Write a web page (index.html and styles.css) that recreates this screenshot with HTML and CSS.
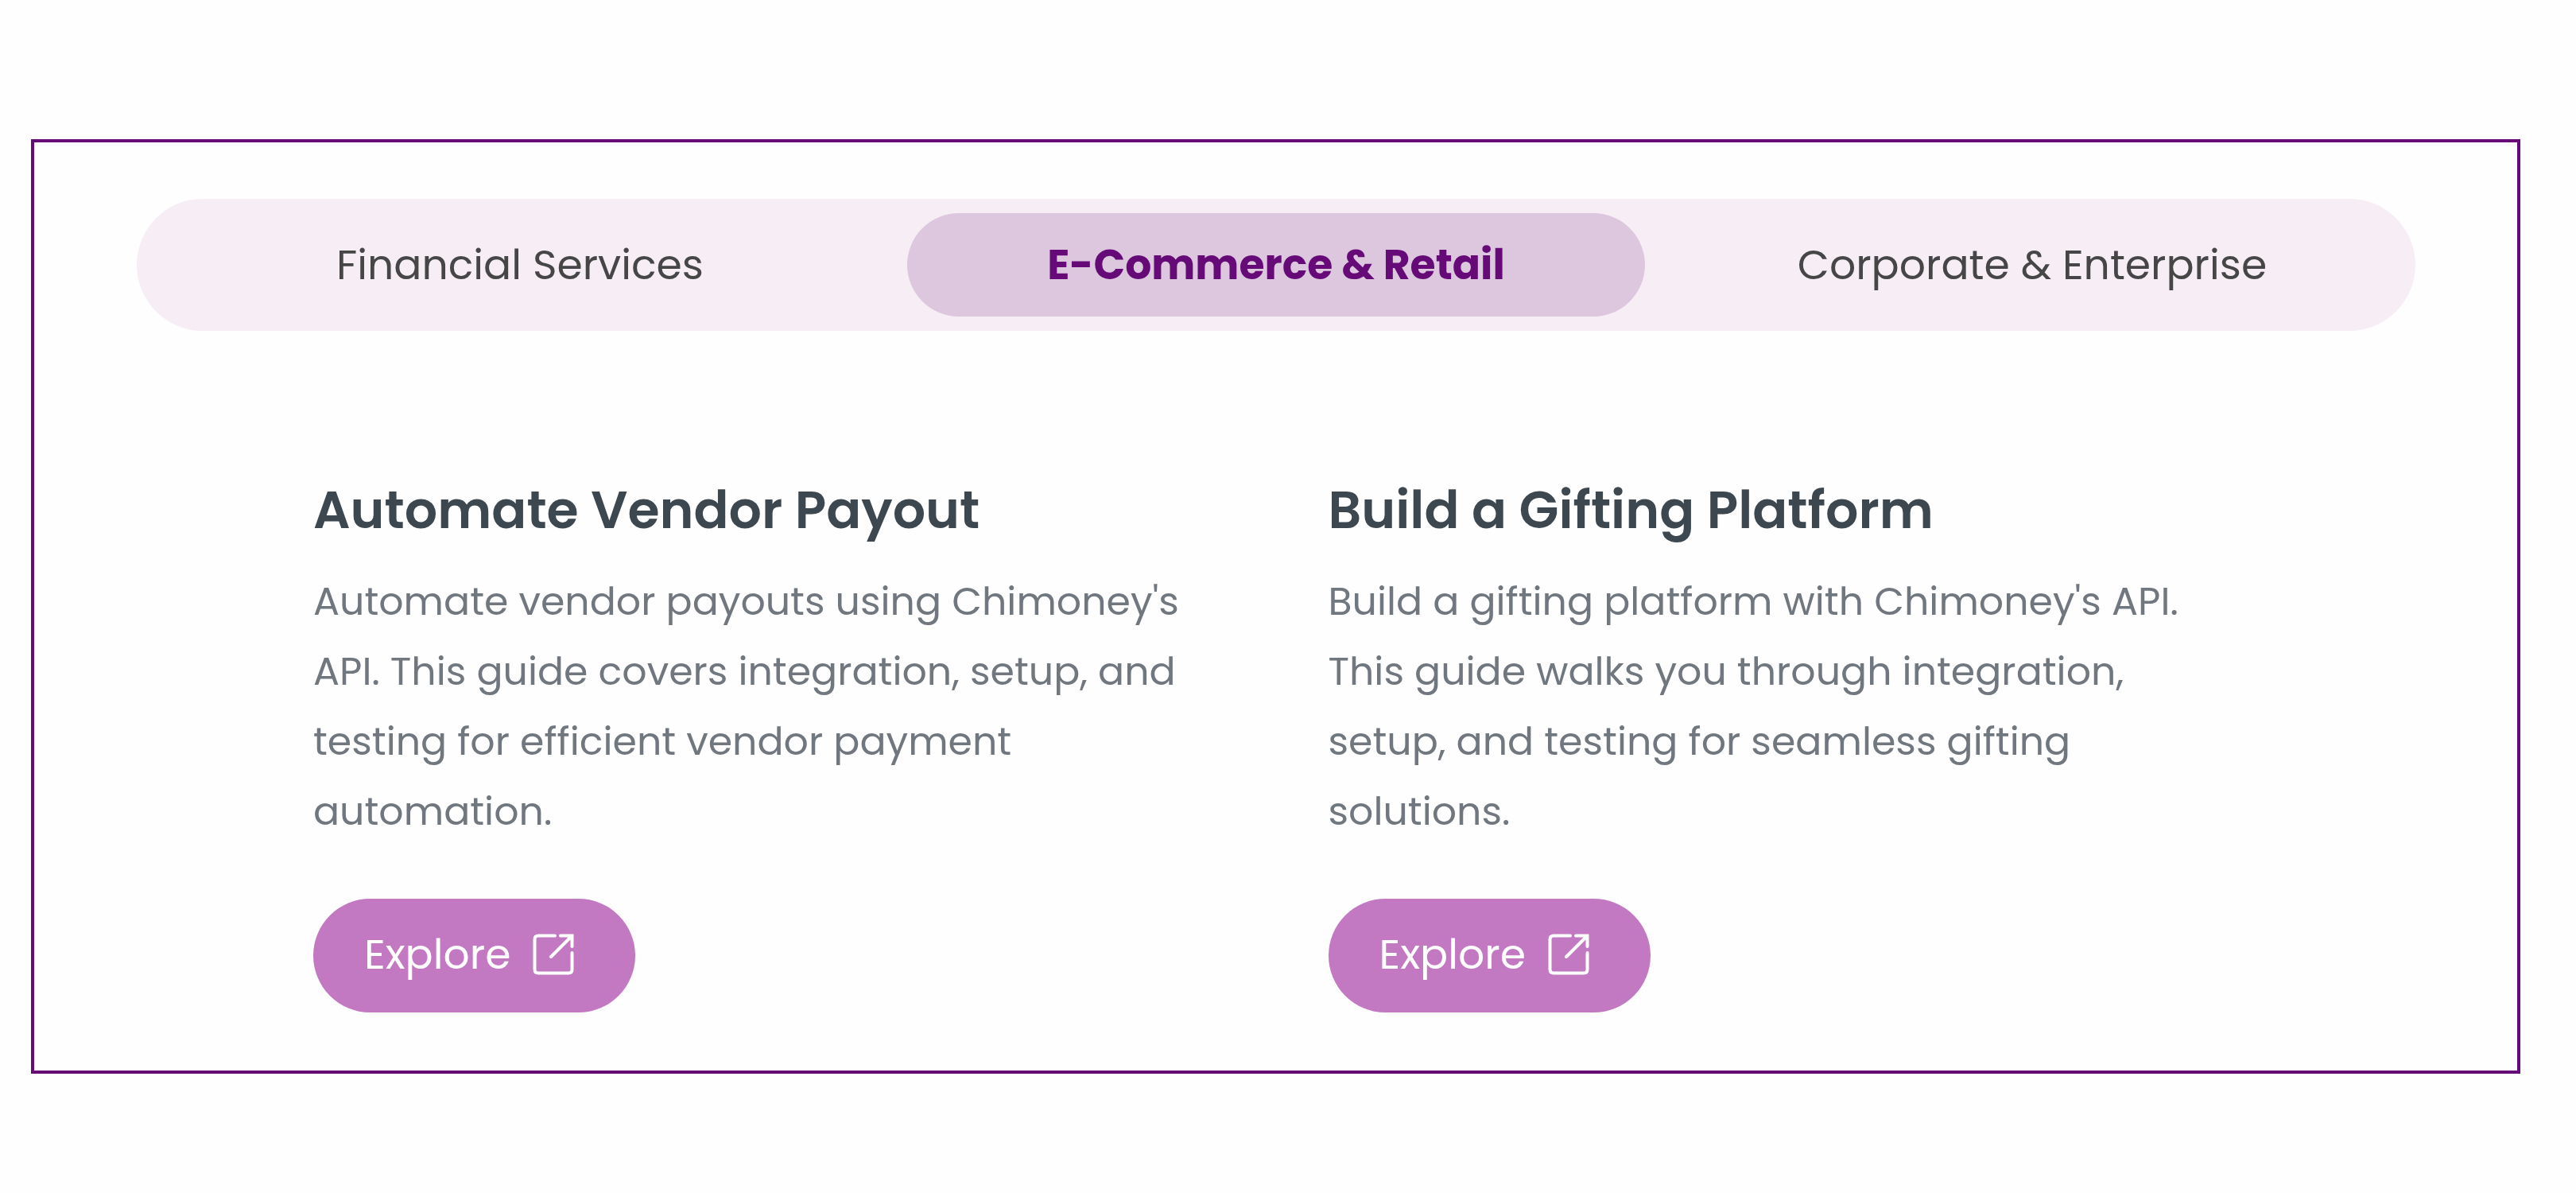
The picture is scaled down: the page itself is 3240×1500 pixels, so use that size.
FILE: index.html
```html
<!DOCTYPE html>
<html lang="en">
<head>
    <meta charset="utf-8">
    <title>Use cases</title>
    <link rel="stylesheet" href="styles.css">
</head>
<body>
    <main class="frame">
        <nav class="tabs">
            <button type="button" class="tab">Financial Services</button>
            <button type="button" class="tab active">E-Commerce &amp; Retail</button>
            <button type="button" class="tab">Corporate &amp; Enterprise</button>
        </nav>
        <section class="guides">
            <article class="guide">
                <h2>Automate Vendor Payout</h2>
                <p>Automate vendor payouts using Chimoney's API. This guide covers integration, setup, and testing for efficient vendor payment automation.</p>
                <a href="#" class="explore">
                    Explore
                    <svg class="icon" viewBox="0 0 52 52">
                        <path d="M28 2.5H7Q2.5 2.5 2.5 7V45Q2.5 49.5 7 49.5H45Q49.5 49.5 49.5 45V24"/>
                        <path d="M35 2.5H49.5V16M48 4L23 29"/>
                    </svg>
                </a>
            </article>
            <article class="guide">
                <h2>Build a Gifting Platform</h2>
                <p>Build a gifting platform with Chimoney's API. This guide walks you through integration, setup, and testing for seamless gifting solutions.</p>
                <a href="#" class="explore">
                    Explore
                    <svg class="icon" viewBox="0 0 52 52">
                        <path d="M28 2.5H7Q2.5 2.5 2.5 7V45Q2.5 49.5 7 49.5H45Q49.5 49.5 49.5 45V24"/>
                        <path d="M35 2.5H49.5V16M48 4L23 29"/>
                    </svg>
                </a>
            </article>
        </section>
    </main>
</body>
</html>
```
FILE: styles.css
```css
* {
    box-sizing: border-box;
}
body {
    margin: 0;
    padding: 175px 70px 0 39px;
    background: #fefefe;
    font-family: Poppins, Inter, sans-serif;
}
.frame {
    border: 4px solid #650a77;
    padding: 71px 128px 73px 129px;
}
.tabs {
    display: grid;
    grid-template-columns: repeat(3, 1fr);
    gap: 23px;
    padding: 18px;
    border-radius: 83px;
    background: #f7edf5;
}
.tab {
    height: 130px;
    border: 0;
    border-radius: 65px;
    background: none;
    color: #464646;
    font: 52px Poppins, Inter, sans-serif;
    cursor: pointer;
}
.tab.active {
    background: #ddc7df;
    color: #650a77;
    font-weight: 700;
}
.guides {
    display: grid;
    grid-template-columns: 1fr 1fr;
    gap: 160px;
    padding: 178px 251px 0 222px;
}
.guide h2 {
    margin: 0;
    color: #3c474f;
    font-size: 65px;
    line-height: 96px;
    font-weight: 600;
}
.guide p {
    margin: 22px 0 66px;
    color: #70777e;
    font-size: 49px;
    line-height: 88px;
}
.explore {
    display: inline-flex;
    align-items: center;
    gap: 28px;
    height: 143px;
    padding: 0 77px 3px 64px;
    border-radius: 72px;
    background: #c279c2;
    color: #fff;
    font-size: 52px;
    text-decoration: none;
}
.icon {
    width: 52px;
    height: 52px;
    fill: none;
    stroke: #fff;
    stroke-width: 4;
    stroke-linecap: round;
}
```
